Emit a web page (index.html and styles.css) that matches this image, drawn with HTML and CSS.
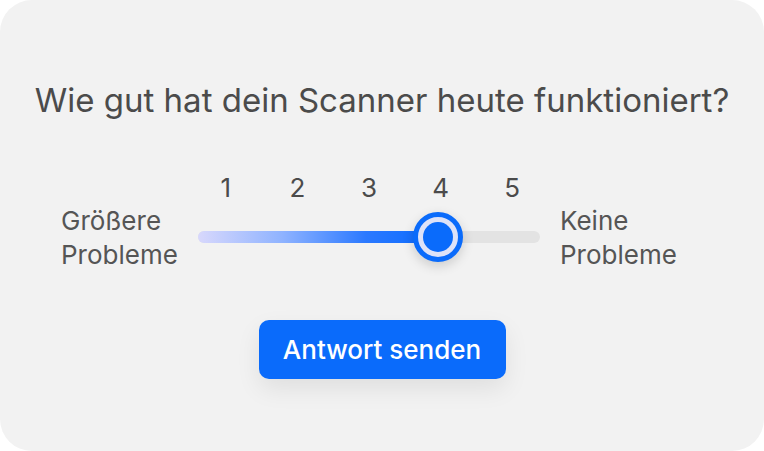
FILE: index.html
```html
<!DOCTYPE html>
<html lang="de">
<head>
<meta charset="utf-8">
<link rel="stylesheet" href="styles.css">
</head>
<body>
<div class="card">
  <h1 class="title">Wie gut hat dein Scanner heute funktioniert?</h1>
  <div class="rating">
    <div class="end-label">Größere<br>Probleme</div>
    <div class="slider">
      <div class="numbers">
        <span>1</span><span>2</span><span>3</span><span>4</span><span>5</span>
      </div>
      <div class="track">
        <div class="fill" style="width:70.3%"></div>
        <div class="thumb" style="left:70.3%"><div class="dot"></div></div>
      </div>
    </div>
    <div class="end-label">Keine<br>Probleme</div>
  </div>
  <div class="actions">
    <button class="submit">Antwort senden</button>
  </div>
</div>
</body>
</html>
```

FILE: styles.css
```css
html, body {
  margin: 0;
  padding: 0;
  background: #ffffff;
}
body {
  width: 764px;
  height: 451px;
  font-family: Inter, "Noto Sans", sans-serif;
}
.card {
  box-sizing: border-box;
  width: 764px;
  height: 451px;
  background: #f2f2f2;
  border-radius: 32px;
  padding-top: 80px;
  display: flex;
  flex-direction: column;
  align-items: center;
}
.title {
  margin: 0;
  font-size: 33px;
  font-weight: 400;
  line-height: 40px;
  color: #4b4b4b;
  white-space: nowrap;
}
.rating {
  margin-top: 52px;
  display: grid;
  grid-template-columns: 117px 358px 143px;
  column-gap: 12px;
  align-items: start;
}
.end-label {
  margin-top: 32px;
  font-size: 26px;
  line-height: 34px;
  color: #555555;
  white-space: nowrap;
}
.slider {
  display: flex;
  flex-direction: column;
}
.numbers {
  display: grid;
  grid-template-columns: repeat(5, 1fr);
  font-size: 26px;
  line-height: 32px;
  color: #4b4b4b;
  text-align: center;
}
.track {
  position: relative;
  margin: 27px 8px 0;
  height: 12px;
  border-radius: 6px;
  background: #e3e3e3;
}
.fill {
  height: 100%;
  border-radius: 6px;
  background: linear-gradient(90deg, #d8d8fc 0%, #8fb3ff 35%, #2b79ff 70%, #0a6bff 100%);
}
.thumb {
  position: absolute;
  top: 50%;
  width: 50px;
  height: 50px;
  box-sizing: border-box;
  border: 5px solid #0a6bfb;
  border-radius: 50%;
  background: #dde2f8;
  transform: translate(-50%, -50%);
  box-shadow: 0 4px 12px rgba(0, 0, 0, 0.16);
  display: flex;
  align-items: center;
  justify-content: center;
}
.dot {
  width: 30px;
  height: 30px;
  border-radius: 50%;
  background: #0a6bfb;
}
.actions {
  margin-top: 48px;
}
.submit {
  width: 247px;
  height: 59px;
  border: none;
  border-radius: 10px;
  background: #0a6bfb;
  color: #ffffff;
  font-family: Inter, "Noto Sans", sans-serif;
  font-size: 26px;
  font-weight: 500;
  box-shadow: 0 10px 24px rgba(0, 0, 0, 0.08);
  cursor: pointer;
}
```
